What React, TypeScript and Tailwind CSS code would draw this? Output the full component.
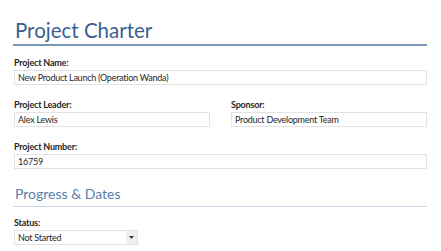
import React from 'react';

const font = { fontFamily: 'Lato, "Open Sans", sans-serif' };

const Label: React.FC<{ children: React.ReactNode }> = ({ children }) => (
  <div className="text-[9px] font-bold tracking-[-0.2px] text-[#262626] leading-[12px] mb-[1px]">{children}</div>
);

const Field: React.FC<{ label: string; value: string; className?: string }> = ({ label, value, className }) => (
  <div className={className}>
    <Label>{label}</Label>
    <div className="h-[15px] border border-[#e3e3e3] px-[3px] text-[9px] tracking-[-0.25px] leading-[13px] text-[#262626]">
      {value}
    </div>
  </div>
);

export default function App() {
  return (
    <div className="w-[441px] h-[251px] overflow-hidden bg-white" style={font}>
      <div className="pl-[13px] pr-[14px] pt-[17px]">
        <h1 className="text-[20.5px] leading-[26px] text-[#3b5f8e] pl-[2px] pb-[1px] border-b-2 border-[#7b94b3]">
          Project Charter
        </h1>
        <div className="pl-[1px] pt-[11px] flex flex-col gap-[14px]">
          <Field label="Project Name:" value="New Product Launch (Operation Wanda)" />
          <div className="flex gap-[21px]">
            <Field label="Project Leader:" value="Alex Lewis" className="w-[196px]" />
            <Field label="Sponsor:" value="Product Development Team" className="flex-1" />
          </div>
          <Field label="Project Number:" value="16759" />
        </div>
        <h2 className="mt-[16px] text-[14px] leading-[18px] text-[#5a7eab] pl-[2px] pb-[3px] border-b border-[#c9d6e5]">
          Progress &amp; Dates
        </h2>
        <div className="pl-[1px] pt-[10px]">
          <Label>Status:</Label>
          <div className="w-[124px] h-[15px] border border-[#e3e3e3] flex">
            <div className="flex-1 px-[3px] text-[9px] tracking-[-0.25px] leading-[13px] text-[#262626]">Not Started</div>
            <div className="w-[11px] bg-[#efefef] flex items-center justify-center">
              <svg width="5" height="3" viewBox="0 0 5 3"><path d="M0 0h5L2.5 3z" fill="#333" /></svg>
            </div>
          </div>
        </div>
      </div>
    </div>
  );
}
